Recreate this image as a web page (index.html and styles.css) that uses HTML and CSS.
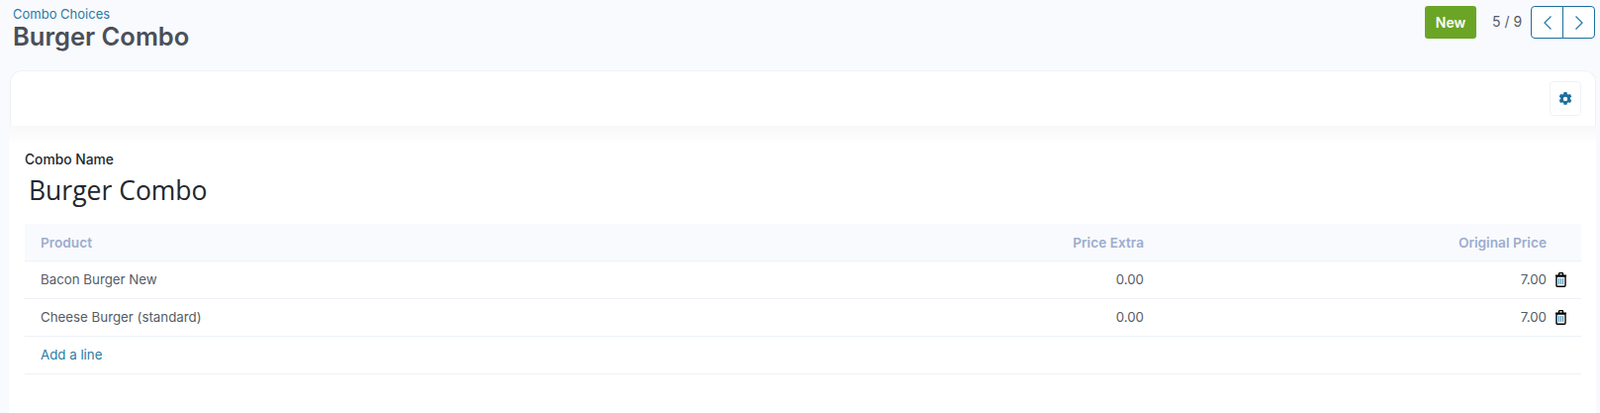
FILE: index.html
```html
<!DOCTYPE html>
<html>

<head>
    <title>Burger Combo</title>
    <link rel="stylesheet" href="styles.css">
</head>

<body>
    <header class="topbar">
        <div class="heading">
            <a class="crumb">Combo Choices</a>
            <h1>Burger Combo</h1>
        </div>
        <div class="actions">
            <button class="btn-new">New</button>
            <span class="pager">5 / 9</span>
            <div class="pager-btns">
                <button class="pager-btn">
                    <svg width="12" height="18" viewBox="0 0 12 18"><path d="M9.5 2.5 3 9l6.5 6.5" /></svg>
                </button>
                <button class="pager-btn">
                    <svg width="12" height="18" viewBox="0 0 12 18"><path d="M2.5 2.5 9 9l-6.5 6.5" /></svg>
                </button>
            </div>
        </div>
    </header>

    <main class="card">
        <div class="toolbar">
            <button class="btn-gear">
                <svg width="14" height="14" viewBox="0 0 14 14">
                    <path fill-rule="evenodd" d="M5.5 0h3l.4 1.9 1 .6 1.9-.6 1.5 2.6-1.5 1.3v1.2l1.5 1.3-1.5 2.6-1.9-.6-1 .6-.4 1.9h-3l-.4-1.9-1-.6-1.9.6L.7 8.3l1.5-1.3V5.8L.7 4.5l1.5-2.6 1.9.6 1-.6zM7 4.7a2 2 0 1 0 0 4.4 2 2 0 0 0 0-4.4z" />
                </svg>
            </button>
        </div>
        <div class="fade"></div>
        <section class="sheet">
            <label class="field-label">Combo Name</label>
            <div class="field-value">Burger Combo</div>
            <table class="lines">
                <thead>
                    <tr>
                        <th class="col-name">Product</th>
                        <th class="col-extra num">Price Extra</th>
                        <th class="num">Original Price</th>
                        <th class="col-del"></th>
                    </tr>
                </thead>
                <tbody>
                    <tr>
                        <td>Bacon Burger New</td>
                        <td class="num">0.00</td>
                        <td class="num">7.00</td>
                        <td class="col-del">
                            <svg class="trash" width="13" height="15" viewBox="0 0 13 15">
                                <path class="trash-bars" d="M4.5 6v6M6.5 6v6M8.5 6v6" />
                                <path class="trash-body" d="M2 4h9v9.3a1 1 0 0 1-1 1H3a1 1 0 0 1-1-1z" />
                                <path class="trash-lid" d="M1 3.3h11M4.5 3V1.6a1 1 0 0 1 1-1h2a1 1 0 0 1 1 1V3" />
                            </svg>
                        </td>
                    </tr>
                    <tr>
                        <td>Cheese Burger (standard)</td>
                        <td class="num">0.00</td>
                        <td class="num">7.00</td>
                        <td class="col-del">
                            <svg class="trash" width="13" height="15" viewBox="0 0 13 15">
                                <path class="trash-bars" d="M4.5 6v6M6.5 6v6M8.5 6v6" />
                                <path class="trash-body" d="M2 4h9v9.3a1 1 0 0 1-1 1H3a1 1 0 0 1-1-1z" />
                                <path class="trash-lid" d="M1 3.3h11M4.5 3V1.6a1 1 0 0 1 1-1h2a1 1 0 0 1 1 1V3" />
                            </svg>
                        </td>
                    </tr>
                    <tr>
                        <td><a class="add-line">Add a line</a></td>
                        <td></td>
                        <td></td>
                        <td></td>
                    </tr>
                </tbody>
            </table>
        </section>
    </main>
</body>

</html>
```

FILE: styles.css
```css
* {
    box-sizing: border-box;
    padding: 0;
    margin: 0;
}

body {
    background-color: #f9fafd;
    font-family: "Inter", "Liberation Sans", sans-serif;
    color: #4c4c4c;
    height: 417px;
    overflow: hidden;
}

.topbar {
    display: flex;
    justify-content: space-between;
    height: 71px;
    padding: 6px 5px 0 13px;
}

.crumb {
    display: block;
    font-size: 13px;
    line-height: 16px;
    color: #2a7ba5;
}

h1 {
    font-size: 25.5px;
    line-height: 30px;
    font-weight: 600;
    color: #4a4f5a;
}

.actions {
    display: flex;
    align-items: flex-start;
}

.btn-new {
    width: 52px;
    height: 33px;
    border: 0;
    border-radius: 3px;
    background-color: #6ba526;
    color: #fff;
    font: 600 14px "Inter", sans-serif;
}

.pager {
    margin: 8px 0 0 16px;
    width: 39px;
    font-size: 14px;
    line-height: 16px;
    color: #555c66;
}

.pager-btns {
    display: flex;
}

.pager-btn {
    width: 33px;
    height: 33px;
    display: flex;
    align-items: center;
    justify-content: center;
    background-color: #fff;
    border: 1px solid #1c6f9c;
}

.pager-btn:first-child {
    border-radius: 4px 0 0 4px;
}

.pager-btn:last-child {
    margin-left: -1px;
    border-radius: 0 4px 4px 0;
}

.pager-btn path {
    fill: none;
    stroke: #2a7ba5;
    stroke-width: 1.3;
}

.card {
    width: 1604px;
    margin-left: 9px;
    height: 346px;
}

.toolbar {
    display: flex;
    justify-content: flex-end;
    height: 56px;
    padding: 10px 14px 0 0;
    margin-left: 1px;
    background-color: #fff;
    border: 1px solid #eef1f7;
    border-bottom: 0;
    border-radius: 12px 12px 0 0;
}

.btn-gear {
    width: 32px;
    height: 35px;
    display: flex;
    align-items: center;
    justify-content: center;
    background-color: #fff;
    border: 1px solid #eef2f8;
    border-radius: 4px;
}

.btn-gear path {
    fill: #1c6f9c;
}

.fade {
    height: 17px;
    background: linear-gradient(#f8f8fa, #fefefe);
}

.sheet {
    height: 273px;
    padding: 8px 15px 0 16px;
    background-color: #fff;
}

.field-label {
    display: block;
    font-size: 13.8px;
    line-height: 18px;
    font-weight: 500;
    color: #23272e;
}

.field-value {
    font-family: "Open Sans", sans-serif;
    font-size: 26.5px;
    line-height: 36px;
    margin: 4px 0 16px 4px;
    color: #23272e;
}

.lines {
    width: 100%;
    table-layout: fixed;
    border-collapse: collapse;
    font-size: 13.3px;
    color: #555c66;
}

.lines th {
    height: 37px;
    padding-top: 1px;
    font-size: 13.7px;
    font-weight: 600;
    text-align: left;
    color: #9cadcf;
    background-color: #f9fafd;
    border-bottom: 1px solid #edf1f7;
}

.lines td {
    height: 38px;
    border-bottom: 1px solid #edf1f7;
}

.lines th:first-child,
.lines td:first-child {
    padding-left: 16px;
}

.lines .num {
    text-align: right;
}

.col-name {
    width: 900px;
}

.col-extra {
    width: 231px;
}

.lines .col-del {
    width: 35px;
    padding-left: 8px;
}

.trash {
    display: block;
}

.trash-body,
.trash-lid {
    fill: none;
    stroke: #000;
    stroke-width: 1.4;
}

.trash-bars {
    fill: none;
    stroke: #3b8bbd;
    stroke-width: 1;
}

.add-line {
    color: #2a7ba5;
}
```
